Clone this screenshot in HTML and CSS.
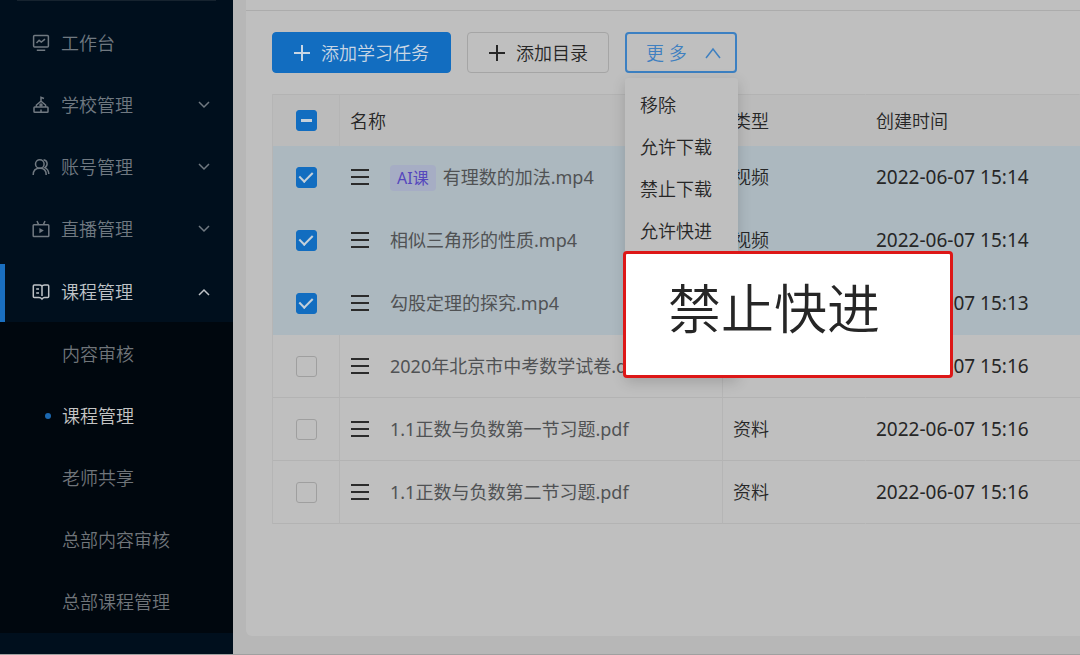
FILE: index.html
```html
<!DOCTYPE html>
<html lang="zh-CN">
<head>
<meta charset="utf-8">
<meta name="viewport" content="width=device-width, initial-scale=1">
<title>课程管理</title>
<link rel="stylesheet" href="styles.css">
</head>
<body>
<div class="layout">
  <nav class="sidebar" aria-label="主导航">
    <hr class="divider">
    <div class="menu">
      <a class="menu-item" href="#">
        <svg class="menu-icon" viewBox="0 0 18 18"><rect x="1.6" y="1.6" width="14.8" height="11.4" rx="1"/><path d="M4.5 9l2.6-2.7 2.2 1.8 3.7-3M4.8 16.3h8.4"/></svg>
        <span>工作台</span>
      </a>
      <a class="menu-item" href="#">
        <svg class="menu-icon" viewBox="0 0 18 18"><rect x="2" y="11" width="14" height="5.3" rx=".8"/><path d="M4.4 11V9L9 5.2 13.6 9v2M9 5.2V1.3l3 1.2M9 16v-2.6"/><circle cx="9" cy="9" r="1"/></svg>
        <span>学校管理</span>
        <svg class="menu-arrow" viewBox="0 0 12 8"><path d="M1 1l5 5 5-5"/></svg>
      </a>
      <a class="menu-item" href="#">
        <svg class="menu-icon" viewBox="0 0 18 18"><circle cx="7.8" cy="6" r="4.3"/><path d="M1.2 17c0-4.500 2.600-6.700 6.600-6.700s6.400 2.200 6.400 6.700M11.600 1.700c4.200.6 4.600 6 1.300 7.900 2.500 1.100 3.800 3.300 3.900 6.400"/></svg>
        <span>账号管理</span>
        <svg class="menu-arrow" viewBox="0 0 12 8"><path d="M1 1l5 5 5-5"/></svg>
      </a>
      <a class="menu-item" href="#">
        <svg class="menu-icon" viewBox="0 0 18 18"><rect x="1.200" y="4.800" width="15.600" height="11.800" rx=".8"/><path d="M5 1l1.600 3.600M13 1l-1.600 3.600"/><path class="solid" d="M7.400 8v5.200l4.400-2.600z"/></svg>
        <span>直播管理</span>
        <svg class="menu-arrow" viewBox="0 0 12 8"><path d="M1 1l5 5 5-5"/></svg>
      </a>
      <a class="menu-item active" href="#">
        <svg class="menu-icon" viewBox="0 0 18 18"><path d="M10 3.200Q9 2 7.500 2H2.300q-1 0-1 1v10.600q0 1 1 1H7q1.800 0 3 1.400 1.200-1.400 2.500-1.400h3.200q1 0 1-1V3q0-1-1-1h-3.200Q10.500 2 10 3.200V13M4.200 6h2.800M4.200 10h2.800"/></svg>
        <span>课程管理</span>
        <svg class="menu-arrow" viewBox="0 0 12 8"><path d="M1 7l5-5 5 5"/></svg>
      </a>
    </div>
    <div class="submenu">
      <a href="#">内容审核</a>
      <a href="#" class="current" aria-current="page">课程管理</a>
      <a href="#">老师共享</a>
      <a href="#">总部内容审核</a>
      <a href="#">总部课程管理</a>
    </div>
  </nav>

  <main class="content">
    <section class="card">
      <div class="toolbar">
        <button class="btn primary" type="button">
          <svg class="plus" viewBox="0 0 18 18"><path d="M9 1v16M1 9h16"/></svg>添加学习任务
        </button>
        <button class="btn" type="button">
          <svg class="plus" viewBox="0 0 18 18"><path d="M9 1v16M1 9h16"/></svg>添加目录
        </button>
        <div class="dropdown">
          <button class="btn more" type="button" aria-expanded="true">更 多
            <svg class="more-arrow" viewBox="0 0 16 12"><path d="M1 11l7-9 7 9"/></svg>
          </button>
          <div class="dropdown-menu">
            <button type="button">移除</button>
            <button type="button">允许下载</button>
            <button type="button">禁止下载</button>
            <button type="button">允许快进</button>
            <button type="button" class="callout">禁止快进</button>
          </div>
        </div>
      </div>

      <table class="files">
        <colgroup><col class="col-check"><col class="col-name"><col class="col-type"><col></colgroup>
        <thead>
          <tr><th><input class="check partial" type="checkbox" aria-label="全选"></th><th>名称</th><th>类型</th><th>创建时间</th></tr>
        </thead>
        <tbody>
          <tr class="selected">
            <td><input class="check" type="checkbox" aria-label="选择 有理数的加法.mp4" checked></td>
            <td><div class="name"><svg class="handle" viewBox="0 0 18 16"><path d="M0 1h18M0 8h18M0 15h18"/></svg><span class="file"><span class="tag">AI课</span>有理数的加法.mp4</span></div></td>
            <td>视频</td><td class="time">2022-06-07 15:14</td>
          </tr>
          <tr class="selected">
            <td><input class="check" type="checkbox" aria-label="选择 相似三角形的性质.mp4" checked></td>
            <td><div class="name"><svg class="handle" viewBox="0 0 18 16"><path d="M0 1h18M0 8h18M0 15h18"/></svg><span class="file">相似三角形的性质.mp4</span></div></td>
            <td>视频</td><td class="time">2022-06-07 15:14</td>
          </tr>
          <tr class="selected">
            <td><input class="check" type="checkbox" aria-label="选择 勾股定理的探究.mp4" checked></td>
            <td><div class="name"><svg class="handle" viewBox="0 0 18 16"><path d="M0 1h18M0 8h18M0 15h18"/></svg><span class="file">勾股定理的探究.mp4</span></div></td>
            <td></td><td class="time">2022-06-07 15:13</td>
          </tr>
          <tr>
            <td><input class="check" type="checkbox" aria-label="选择 2020年北京市中考数学试卷"></td>
            <td><div class="name"><svg class="handle" viewBox="0 0 18 16"><path d="M0 1h18M0 8h18M0 15h18"/></svg><span class="file">2020年北京市中考数学试卷.docx</span></div></td>
            <td></td><td class="time">2022-06-07 15:16</td>
          </tr>
          <tr>
            <td><input class="check" type="checkbox" aria-label="选择 1.1正数与负数第一节习题.pdf"></td>
            <td><div class="name"><svg class="handle" viewBox="0 0 18 16"><path d="M0 1h18M0 8h18M0 15h18"/></svg><span class="file">1.1正数与负数第一节习题.pdf</span></div></td>
            <td>资料</td><td class="time">2022-06-07 15:16</td>
          </tr>
          <tr>
            <td><input class="check" type="checkbox" aria-label="选择 1.1正数与负数第二节习题.pdf"></td>
            <td><div class="name"><svg class="handle" viewBox="0 0 18 16"><path d="M0 1h18M0 8h18M0 15h18"/></svg><span class="file">1.1正数与负数第二节习题.pdf</span></div></td>
            <td>资料</td><td class="time">2022-06-07 15:16</td>
          </tr>
        </tbody>
      </table>
    </section>
  </main>
</div>
</body>
</html>
```

FILE: styles.css
```css
* {
  box-sizing: border-box;
}

body {
  margin: 0;
  background: #b7b7b7;
  color: #262626;
  font-family: "Noto Sans", "Noto Sans CJK SC", sans-serif;
  font-size: 18px;
  font-weight: 350;
  line-height: 26px;
}

button {
  font: inherit;
  color: inherit;
  cursor: pointer;
}

a {
  color: inherit;
  text-decoration: none;
}

svg {
  fill: none;
  stroke: currentColor;
  flex: none;
}

.layout {
  display: flex;
  min-height: 100vh;
  border-bottom: 1px solid #a0a0a0;
}

/* Sidebar */
.sidebar {
  flex: 0 0 233px;
  background: #000f1d;
  color: #707981;
}

.divider {
  height: 1px;
  margin: 0 17px;
  border: 0;
  background: #16232f;
}

.menu {
  display: flex;
  flex-direction: column;
  gap: 5px;
  padding-top: 13px;
}

.menu-item {
  display: flex;
  align-items: center;
  height: 57px;
  padding: 0 23px 0 32px;
}

.menu-icon {
  width: 18px;
  height: 18px;
  margin-right: 11px;
  stroke-width: 1.5;
}

.menu-icon .solid {
  fill: currentColor;
  stroke: none;
}

.menu-arrow {
  width: 12px;
  height: 8px;
  margin-left: auto;
  stroke-width: 1.5;
}

.menu-item.active {
  height: 58px;
  margin-top: 2px;
  padding-bottom: 3px;
  padding-left: 27px;
  border-left: 5px solid #1a6fc0;
  color: #bfc3c7;
}

.submenu {
  display: flex;
  flex-direction: column;
  padding-top: 1px;
  background: #00070e;
  color: #70757a;
}

.submenu a {
  display: flex;
  align-items: center;
  height: 62px;
  padding-left: 62px;
}

.submenu .current {
  padding-left: 45px;
  color: #c4c4c4;
}

.current::before {
  content: "";
  width: 6px;
  height: 6px;
  margin-right: 11px;
  border-radius: 50%;
  background: #1b68b0;
}

/* Content */
.content {
  display: flex;
  flex: 1;
  min-width: 0;
  padding: 0 0 18px 13px;
}

.card {
  flex: 1;
  min-width: 0;
  border-bottom-left-radius: 6px;
  background: #bfbfbf;
}

.card::before {
  content: "";
  display: block;
  height: 1px;
  margin-top: 10px;
  background: #acacac;
}

.toolbar {
  display: flex;
  gap: 16px;
  padding: 21px 26px;
}

.btn {
  display: flex;
  align-items: center;
  gap: 10px;
  height: 41px;
  padding: 0 20px;
  border: 1px solid #a5a5a5;
  border-radius: 4px;
  background: #bfbfbf;
  white-space: nowrap;
}

.primary {
  padding: 0 21px 0 20px;
  border-color: #126dc0;
  background: #126dc0;
  color: #c8d6e4;
}

.plus {
  width: 18px;
  height: 18px;
  stroke-width: 2;
}

.more {
  gap: 18px;
  padding: 0 14px 0 19px;
  border: 2px solid #3c80c2;
  color: #3f80c0;
}

.more-arrow {
  width: 16px;
  height: 12px;
  stroke-width: 1.5;
}

.dropdown {
  position: relative;
}

.dropdown-menu {
  position: absolute;
  top: 100%;
  left: 0;
  z-index: 2;
  width: 113px;
  margin-top: 5px;
  padding-top: 6px;
  border-radius: 3px;
  background: #bfbfbf;
  box-shadow: 0 4px 14px rgba(0, 0, 0, 0.16);
}

.dropdown-menu button {
  display: block;
  width: 100%;
  height: 42px;
  padding: 0 15px;
  border: 0;
  background: none;
  text-align: left;
  white-space: nowrap;
}

.dropdown-menu .callout {
  width: 330px;
  height: 127px;
  margin: -1px 0 0 -2px;
  padding: 0 42px 12px;
  border: 3px solid #dd1717;
  border-radius: 4px;
  background: #fff;
  font-size: 53px;
  line-height: 64px;
}

/* File table */
.files {
  width: calc(100% - 26px);
  margin-left: 26px;
  table-layout: fixed;
  border-spacing: 0;
  border-left: 1px solid #b5b5b5;
}

.col-check {
  width: 67px;
}

.col-name {
  width: 383px;
}

.col-type {
  width: 143px;
}

.files th,
.files td {
  height: 63px;
  padding: 0 10px;
  border-right: 1px solid #b5b5b5;
  border-bottom: 1px solid #b3b3b3;
  text-align: left;
  white-space: nowrap;
}

.files th {
  height: 52px;
  border-top: 1px solid #b3b3b3;
  border-bottom: 0;
  background: #bbb;
  font-weight: 350;
}

.files th:first-child,
.files td:first-child {
  padding: 0;
}

.files th:nth-child(n + 2),
.files td:nth-child(3) {
  border-right-color: transparent;
}

.files .selected td {
  border-color: #acb8bf;
  background: #acb8bf;
}

.files .time {
  border-right: 0;
  font-size: 19px;
  font-weight: 400;
}

.name {
  display: flex;
  align-items: center;
  gap: 21px;
  padding-left: 1px;
  color: #505254;
  font-weight: 400;
}

.handle {
  width: 18px;
  height: 16px;
  color: #2b2b2b;
  stroke-width: 2;
}

.tag {
  display: inline-block;
  margin-right: 7px;
  padding: 0 7px;
  border-radius: 4px;
  background: #a6adc4;
  color: #5547bd;
  font-size: 16px;
}

.check {
  appearance: none;
  display: grid;
  place-items: center;
  width: 21px;
  height: 21px;
  margin: 0 auto;
  border: 1px solid #9f9f9f;
  border-radius: 3px;
}

.check:checked,
.check.partial {
  border-color: #126dc0;
  background: #126dc0;
}

.check:checked::after {
  content: "";
  width: 6px;
  height: 11px;
  margin-bottom: 3px;
  border: solid #c5d0da;
  border-width: 0 2px 2px 0;
  transform: rotate(45deg);
}

.check.partial::after {
  content: "";
  width: 11px;
  height: 3px;
  background: #c5d0da;
}
```
